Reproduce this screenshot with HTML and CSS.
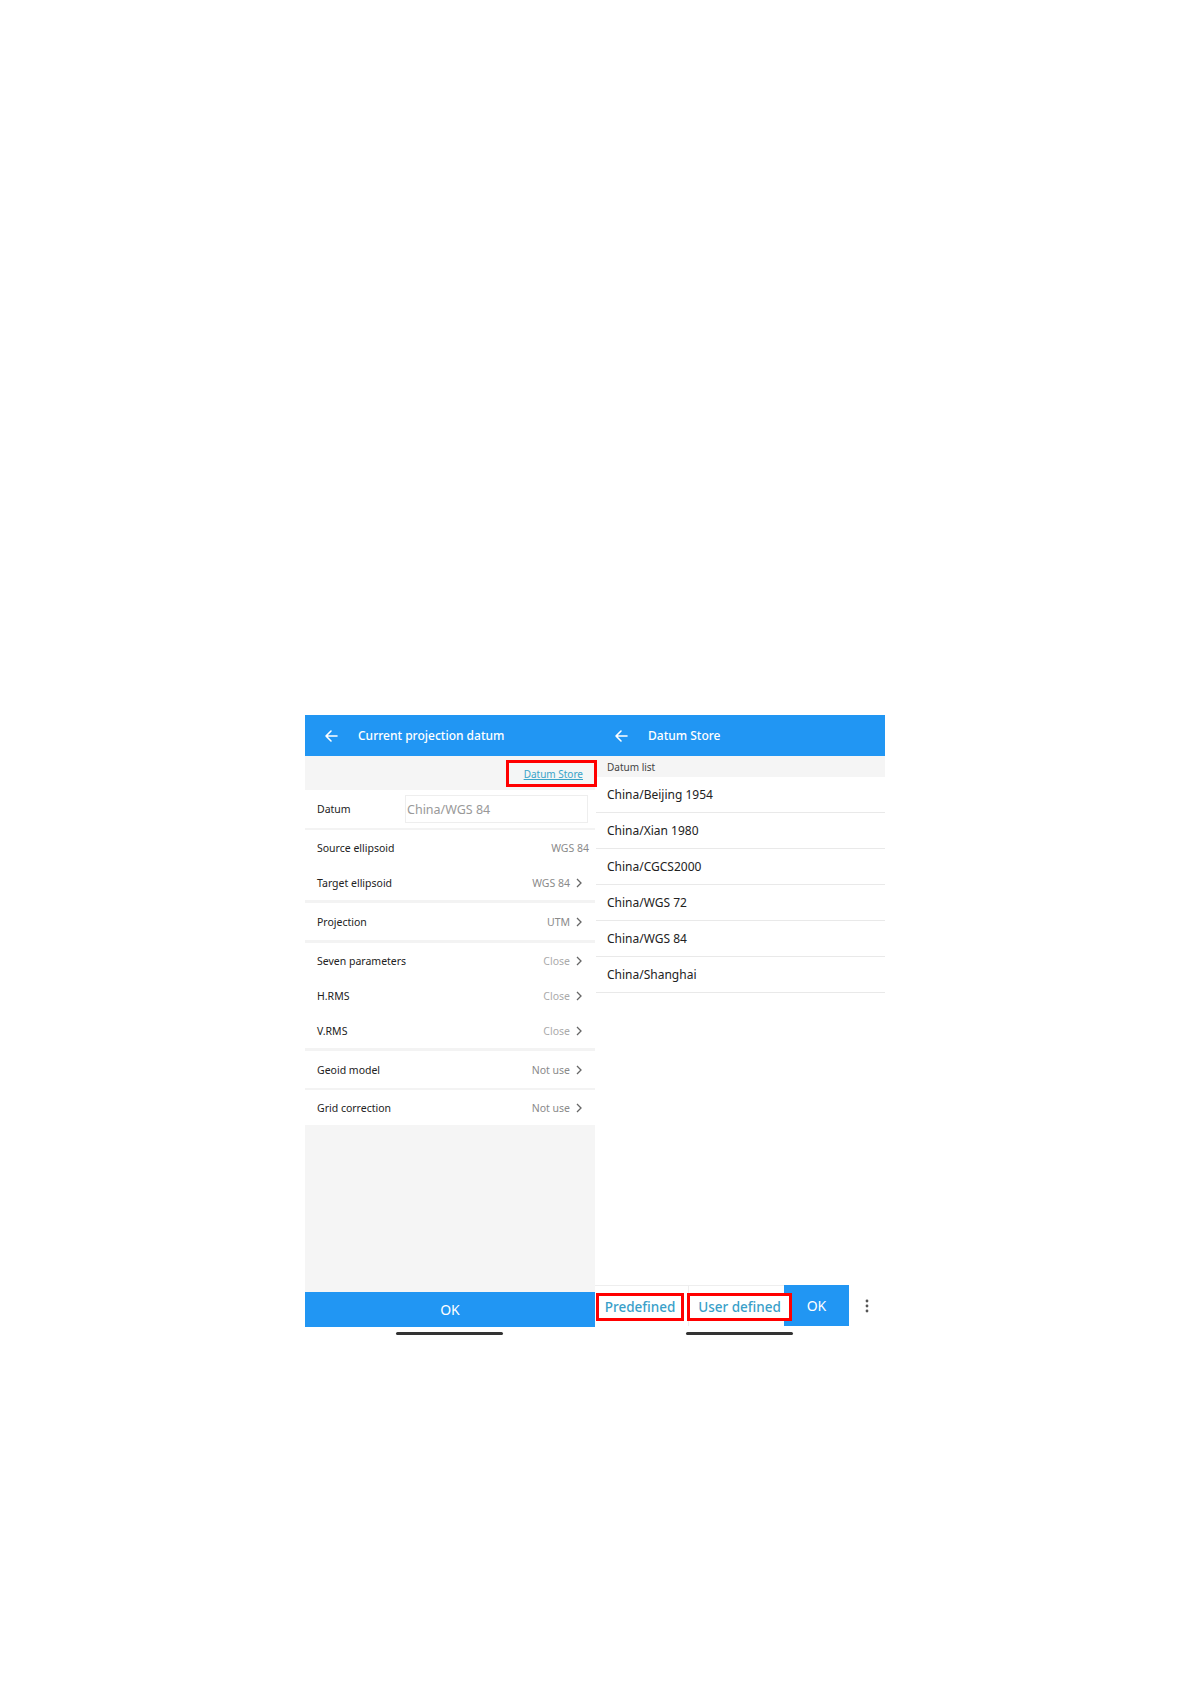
FILE: index.html
```html
<!DOCTYPE html>
<html lang="en">
<head>
    <meta charset="UTF-8">
    <title>Current projection datum / Datum Store</title>
    <link rel="stylesheet" href="styles.css">
</head>
<body>
    <div class="page">
        <div class="screens">
            <!-- Left screen: current projection datum -->
            <div class="screen">
                <div class="topbar">
                    <svg class="back" viewBox="0 0 16 16" width="16" height="16">
                        <path d="M14 8H3M8 3L3 8l5 5" fill="none" stroke="#fff" stroke-width="1.6" stroke-linecap="round" stroke-linejoin="round"/>
                    </svg>
                    <span class="title">Current projection datum</span>
                </div>
                <div class="store-bar">
                    <span class="mark"><a href="#" class="store-link">Datum Store</a></span>
                </div>
                <div class="row datum-row">
                    <span class="label">Datum</span>
                    <div class="datum-input">China/WGS 84</div>
                </div>
                <div class="gap"></div>
                <div class="row">
                    <span class="label">Source ellipsoid</span>
                    <span class="value no-arrow">WGS 84</span>
                </div>
                <div class="row">
                    <span class="label">Target ellipsoid</span>
                    <span class="value">WGS 84</span>
                    <svg class="chev" viewBox="0 0 6 10" width="6" height="10"><path d="M1 1l4 4-4 4" fill="none" stroke="#666" stroke-width="1.3"/></svg>
                </div>
                <div class="gap thick"></div>
                <div class="row tall">
                    <span class="label">Projection</span>
                    <span class="value">UTM</span>
                    <svg class="chev" viewBox="0 0 6 10" width="6" height="10"><path d="M1 1l4 4-4 4" fill="none" stroke="#666" stroke-width="1.3"/></svg>
                </div>
                <div class="gap thick"></div>
                <div class="row">
                    <span class="label">Seven parameters</span>
                    <span class="value light">Close</span>
                    <svg class="chev" viewBox="0 0 6 10" width="6" height="10"><path d="M1 1l4 4-4 4" fill="none" stroke="#666" stroke-width="1.3"/></svg>
                </div>
                <div class="row">
                    <span class="label">H.RMS</span>
                    <span class="value light">Close</span>
                    <svg class="chev" viewBox="0 0 6 10" width="6" height="10"><path d="M1 1l4 4-4 4" fill="none" stroke="#666" stroke-width="1.3"/></svg>
                </div>
                <div class="row">
                    <span class="label">V.RMS</span>
                    <span class="value light">Close</span>
                    <svg class="chev" viewBox="0 0 6 10" width="6" height="10"><path d="M1 1l4 4-4 4" fill="none" stroke="#666" stroke-width="1.3"/></svg>
                </div>
                <div class="gap thick"></div>
                <div class="row tall">
                    <span class="label">Geoid model</span>
                    <span class="value">Not use</span>
                    <svg class="chev" viewBox="0 0 6 10" width="6" height="10"><path d="M1 1l4 4-4 4" fill="none" stroke="#666" stroke-width="1.3"/></svg>
                </div>
                <div class="gap"></div>
                <div class="row">
                    <span class="label">Grid correction</span>
                    <span class="value">Not use</span>
                    <svg class="chev" viewBox="0 0 6 10" width="6" height="10"><path d="M1 1l4 4-4 4" fill="none" stroke="#666" stroke-width="1.3"/></svg>
                </div>
                <div class="filler"></div>
                <button class="ok-wide">OK</button>
                <div class="home"><span></span></div>
            </div>

            <!-- Right screen: datum store -->
            <div class="screen">
                <div class="topbar">
                    <svg class="back" viewBox="0 0 16 16" width="16" height="16">
                        <path d="M14 8H3M8 3L3 8l5 5" fill="none" stroke="#fff" stroke-width="1.6" stroke-linecap="round" stroke-linejoin="round"/>
                    </svg>
                    <span class="title">Datum Store</span>
                </div>
                <div class="list-head">Datum list</div>
                <ul class="datum-list">
                    <li>China/Beijing 1954</li>
                    <li>China/Xian 1980</li>
                    <li>China/CGCS2000</li>
                    <li>China/WGS 72</li>
                    <li>China/WGS 84</li>
                    <li>China/Shanghai</li>
                </ul>
                <div class="blank"></div>
                <div class="actions">
                    <div class="tab first"><span class="mark">Predefined</span></div>
                    <div class="tab second"><span class="mark wide">User defined</span></div>
                    <button class="ok-small">OK</button>
                    <div class="more">
                        <svg viewBox="0 0 4 16" width="4" height="16">
                            <circle cx="2" cy="3" r="1.4" fill="#555"/>
                            <circle cx="2" cy="8" r="1.4" fill="#555"/>
                            <circle cx="2" cy="13" r="1.4" fill="#555"/>
                        </svg>
                    </div>
                </div>
                <div class="home"><span></span></div>
            </div>
        </div>
    </div>
</body>
</html>
```

FILE: styles.css
```css
body {
    margin: 0;
    background-color: #fff;
    font-family: "Noto Sans", "Open Sans", Arial, sans-serif;
    color: #333;
}

.page {
    padding: 715px 0 0 305px;
    height: 969px;
}

.screens {
    display: flex;
    width: 580px;
}

.screen {
    width: 290px;
    height: 620px;
    display: flex;
    flex-direction: column;
}

.topbar {
    height: 41px;
    background-color: #2196f3;
    display: flex;
    align-items: center;
    padding-left: 18px;
    flex-shrink: 0;
}

.back {
    margin-right: 19px;
}

.title {
    color: #fff;
    font-size: 12px;
    font-weight: 500;
}

.store-bar {
    height: 34px;
    background-color: #f5f5f5;
    display: flex;
    align-items: center;
    justify-content: flex-end;
    flex-shrink: 0;
}

.mark {
    border: 3px solid #f00;
    box-sizing: border-box;
    display: flex;
    align-items: center;
}

.store-bar .mark {
    width: 91px;
    height: 27px;
    margin-right: -2px;
    margin-top: 1px;
    justify-content: flex-end;
    padding-right: 11px;
    background-color: #f4f6f6;
    position: relative;
    z-index: 2;
}

.store-link {
    color: #3aa3c8;
    font-size: 10px;
    text-decoration: underline;
}

.row {
    height: 35px;
    display: flex;
    align-items: center;
    padding: 0 12px;
    background-color: #fff;
    flex-shrink: 0;
}

.row.tall {
    height: 37px;
}

.datum-row {
    height: 38px;
    padding-right: 7px;
}

.label {
    font-size: 10.5px;
    color: #222;
    flex: 1;
}

.datum-row .label {
    flex: 0 0 88px;
}

.datum-input {
    width: 181px;
    height: 26px;
    border: 1px solid #eee;
    color: #999;
    font-size: 12.5px;
    display: flex;
    align-items: center;
    padding-left: 1px;
    box-sizing: content-box;
}

.value {
    font-size: 10.5px;
    color: #8a8a8a;
}

.value.light {
    color: #aaa;
}

.value.no-arrow {
    margin-right: -6px;
}

.chev {
    margin-left: 6px;
    margin-right: 1px;
}

.gap {
    height: 2px;
    background-color: #f3f3f3;
    flex-shrink: 0;
}

.gap.thick {
    height: 3px;
}

.filler {
    flex: 1;
    background-color: #f5f5f5;
}

.ok-wide {
    height: 35px;
    border: none;
    background-color: #2196f3;
    color: #fff;
    font-family: inherit;
    font-size: 14px;
    padding: 0;
    flex-shrink: 0;
}

.home {
    height: 8px;
    display: flex;
    justify-content: center;
    align-items: flex-end;
    flex-shrink: 0;
}

.home span {
    display: block;
    width: 107px;
    height: 3px;
    background-color: #333;
    border-radius: 2px;
    margin-left: -2px;
}

.list-head {
    height: 21px;
    background-color: #f5f5f5;
    font-size: 10px;
    color: #444;
    padding-left: 12px;
    display: flex;
    align-items: center;
    flex-shrink: 0;
}

.datum-list {
    list-style: none;
    margin: 0;
    padding: 0;
}

.datum-list li {
    height: 35px;
    border-bottom: 1px solid #e9e9e9;
    margin-left: 1px;
    padding-left: 11px;
    font-size: 12px;
    color: #222;
    display: flex;
    align-items: center;
}

.blank {
    flex: 1;
}

.actions {
    height: 41px;
    display: flex;
    flex-shrink: 0;
    margin-bottom: 1px;
}

.tab {
    border-top: 1px solid #eee;
    display: flex;
    align-items: center;
    box-sizing: border-box;
}

.tab.first {
    width: 94px;
    padding-left: 1px;
    border-right: 1px solid #eee;
}

.tab.second {
    width: 95px;
    position: relative;
    z-index: 1;
}

.tab .mark {
    height: 28px;
    width: 88px;
    flex-shrink: 0;
    justify-content: center;
    font-size: 13.5px;
    font-weight: 500;
    color: #3a9fc9;
    background-color: #fff;
    margin-top: 1px;
}

.tab .mark.wide {
    width: 105px;
    margin-left: -2px;
}

.ok-small {
    width: 65px;
    border: none;
    background-color: #2196f3;
    color: #fff;
    font-family: inherit;
    font-size: 14px;
    padding: 0;
}

.more {
    flex: 1;
    display: flex;
    align-items: center;
    justify-content: center;
}
```
